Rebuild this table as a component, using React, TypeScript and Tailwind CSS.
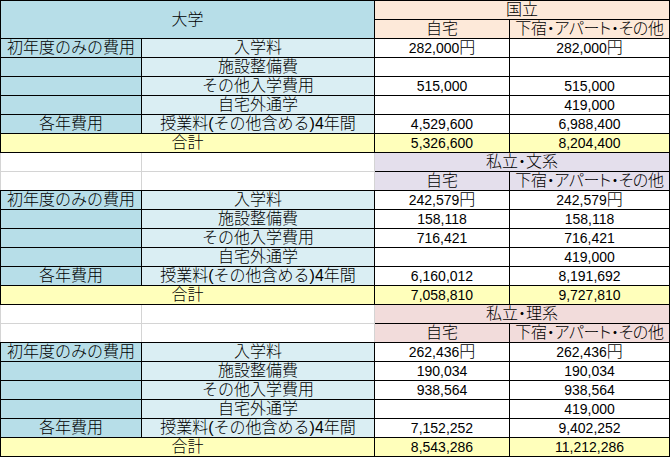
import * as React from "react";

type Row = { label: string; home: string; away: string };
type Section = { title: string; headBg: string; rows: Row[]; total: [string, string] };

const sections: Section[] = [
  {
    title: "国立",
    headBg: "bg-[#fde9d9]",
    rows: [
      { label: "入学料", home: "282,000円", away: "282,000円" },
      { label: "施設整備費", home: "", away: "" },
      { label: "その他入学費用", home: "515,000", away: "515,000" },
      { label: "自宅外通学", home: "", away: "419,000" },
      { label: "授業料(その他含める)4年間", home: "4,529,600", away: "6,988,400" },
    ],
    total: ["5,326,600", "8,204,400"],
  },
  {
    title: "私立・文系",
    headBg: "bg-[#e4dfec]",
    rows: [
      { label: "入学料", home: "242,579円", away: "242,579円" },
      { label: "施設整備費", home: "158,118", away: "158,118" },
      { label: "その他入学費用", home: "716,421", away: "716,421" },
      { label: "自宅外通学", home: "", away: "419,000" },
      { label: "授業料(その他含める)4年間", home: "6,160,012", away: "8,191,692" },
    ],
    total: ["7,058,810", "9,727,810"],
  },
  {
    title: "私立・理系",
    headBg: "bg-[#f2dcdb]",
    rows: [
      { label: "入学料", home: "262,436円", away: "262,436円" },
      { label: "施設整備費", home: "190,034", away: "190,034" },
      { label: "その他入学費用", home: "938,564", away: "938,564" },
      { label: "自宅外通学", home: "", away: "419,000" },
      { label: "授業料(その他含める)4年間", home: "7,152,252", away: "9,402,252" },
    ],
    total: ["8,543,286", "11,212,286"],
  },
];

const cell = "h-[18px] p-0 text-center align-middle leading-[18px] whitespace-nowrap overflow-hidden";

function Num({ value }: { value: string }) {
  // 円 is drawn wider than the digits
  if (value.endsWith("円")) {
    return (
      <>
        {value.slice(0, -1)}
        <span className="text-[16px]">円</span>
      </>
    );
  }
  return <>{value}</>;
}

function SectionRows({ s, first }: { s: Section; first: boolean }) {
  return (
    <>
      <tr>
        {first ? (
          <td
            colSpan={2}
            rowSpan={2}
            className={`${cell} border border-black bg-[#b7dee8] text-[16px]`}
          >
            大学
          </td>
        ) : (
          <>
            <td className={`${cell} border border-[#d4d4d4] border-t-black bg-white`} />
            <td className={`${cell} border border-[#d4d4d4] border-t-black bg-white`} />
          </>
        )}
        <td
          colSpan={2}
          className={`${cell} border border-black ${s.headBg} text-[16px] [font-feature-settings:'palt']`}
        >
          {s.title}
        </td>
      </tr>
      <tr>
        {!first && (
          <>
            <td className={`${cell} border border-[#d4d4d4] border-b-black bg-white`} />
            <td className={`${cell} border border-[#d4d4d4] border-b-black bg-white`} />
          </>
        )}
        <td className={`${cell} border border-black ${s.headBg} text-[16px]`}>自宅</td>
        <td
          className={`${cell} border border-black ${s.headBg} text-[16px] [font-feature-settings:'palt'] tracking-[-0.3px]`}
        >
          下宿・アパート・その他
        </td>
      </tr>
      {s.rows.map((r, i) => (
        <tr key={r.label}>
          <td className={`${cell} border border-black bg-[#b7dee8] text-[16px]`}>
            {i === 0 ? "初年度のみの費用" : i === 4 ? "各年費用" : ""}
          </td>
          <td className={`${cell} border border-black bg-[#daeef3] text-[16px]`}>{r.label}</td>
          <td className={`${cell} border border-black bg-white text-[14px]`}>
            <Num value={r.home} />
          </td>
          <td className={`${cell} border border-black bg-white text-[14px]`}>
            <Num value={r.away} />
          </td>
        </tr>
      ))}
      <tr>
        <td colSpan={2} className={`${cell} border border-black bg-[#ffffbb] text-[16px]`}>
          合計
        </td>
        <td className={`${cell} border border-black bg-[#ffffbb] text-[14px]`}>{s.total[0]}</td>
        <td className={`${cell} border border-black bg-[#ffffbb] text-[14px]`}>{s.total[1]}</td>
      </tr>
    </>
  );
}

export default function App() {
  return (
    <div className="w-[671px] h-[458px] overflow-hidden bg-white text-black font-light [font-family:'Liberation_Sans','Noto_Sans_CJK_JP',sans-serif]">
      <table className="table-fixed border-collapse w-[670px]">
        <colgroup>
          <col className="w-[141px]" />
          <col className="w-[233px]" />
          <col className="w-[135px]" />
          <col className="w-[160px]" />
        </colgroup>
        <tbody>
          {sections.map((s, i) => (
            <SectionRows key={s.title} s={s} first={i === 0} />
          ))}
        </tbody>
      </table>
    </div>
  );
}
